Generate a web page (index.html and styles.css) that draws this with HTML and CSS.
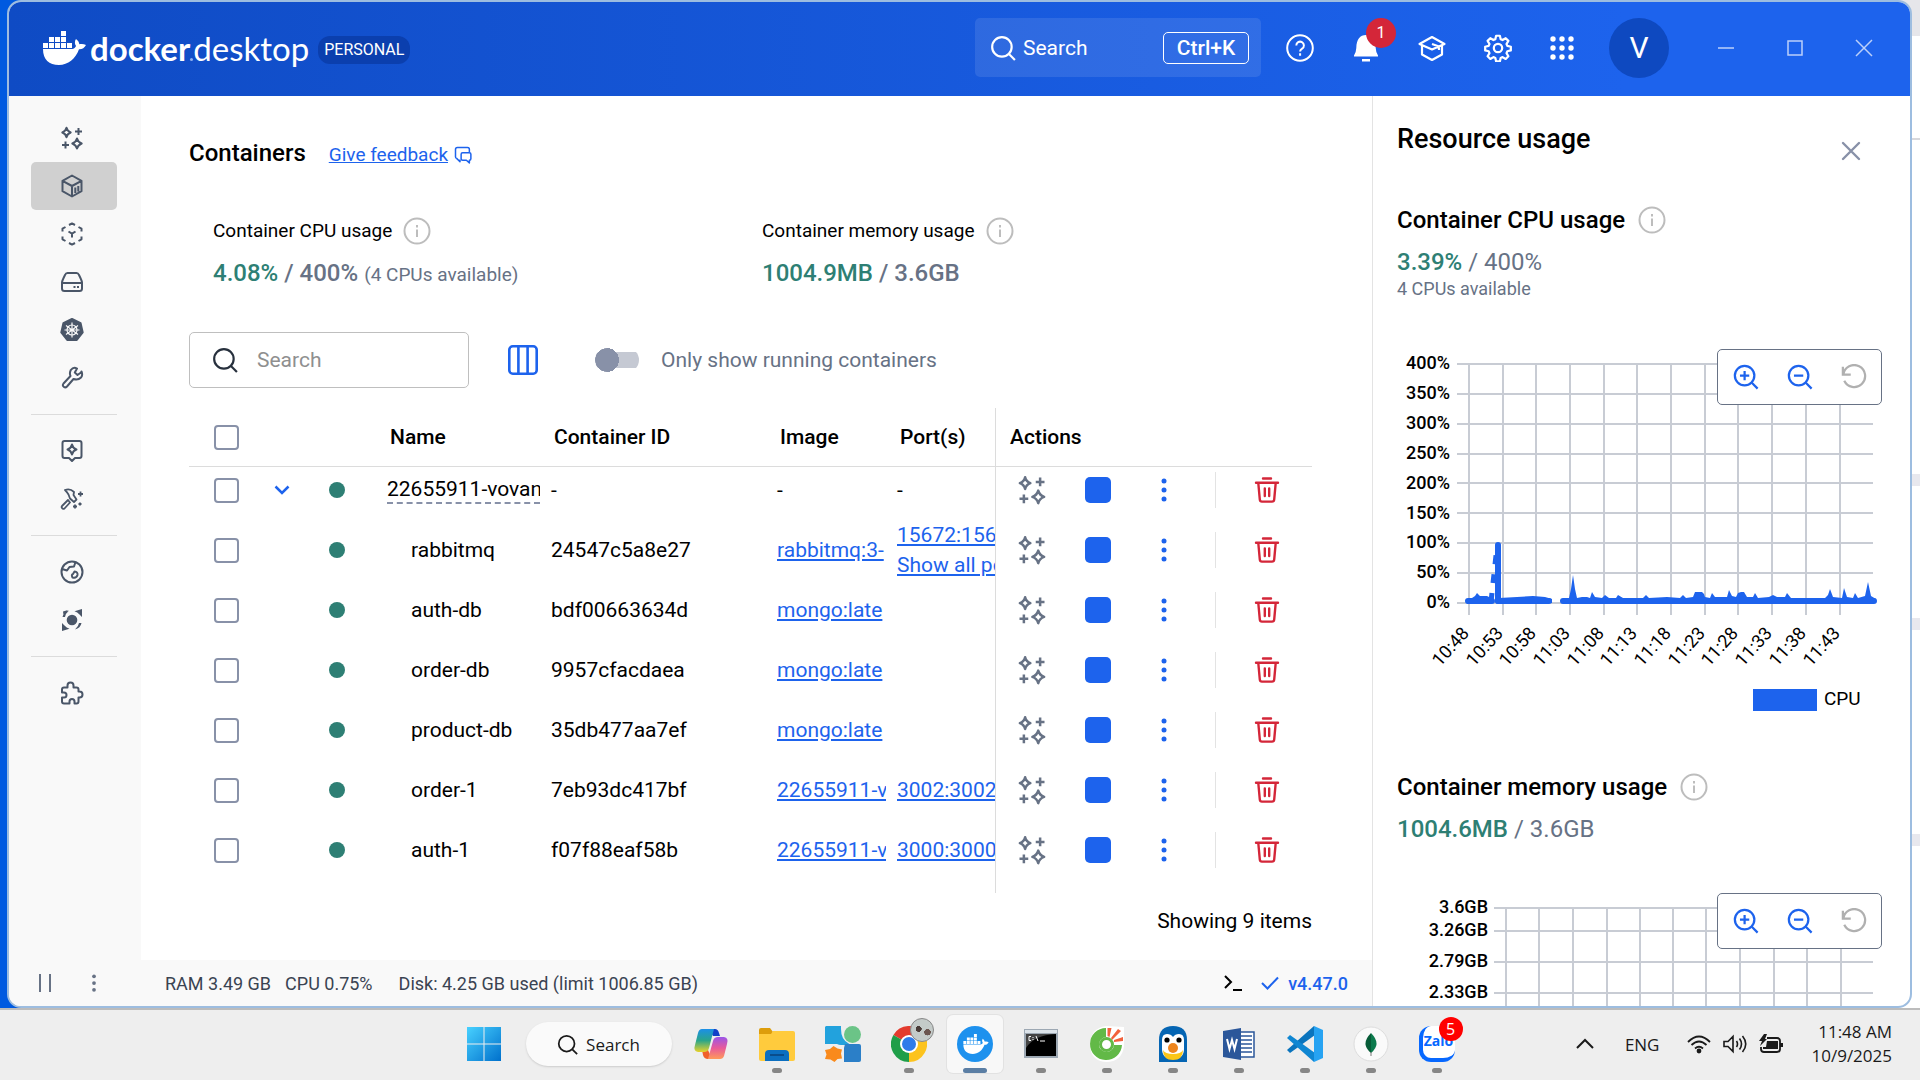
FILE: index.html
```html
<!DOCTYPE html>
<html lang="en">
<head>
<meta charset="utf-8">
<meta name="viewport" content="width=device-width, initial-scale=1">
<title>Docker Desktop</title>
<link rel="stylesheet" href="styles.css">
</head>
<body>
<svg class="sprite" aria-hidden="true">
  <symbol id="whale" viewBox="0 0 43 34"><path fill="currentColor" d="M18 0h5v5h-5zM6 6h5v5H6zM12 6h5v5h-5zM18 6h5v5h-5zM0 12h5v5H0zM6 12h5v5H6zM12 12h5v5h-5zM18 12h5v5h-5zM24 12h5v5h-5zM0 18H29C31 18 32.500 16.500 33 15C31.500 12.500 31.600 10 33 8C35 9.500 36 11 36.400 13.200C39 12.600 41 13 43 14C41.500 17 39 18.500 36 18.300C32.500 28 25 34 16 34C6 34 0 28.500 0 18Z"/></symbol>
  <symbol id="search" viewBox="0 0 24 24"><g fill="none" stroke="currentColor" stroke-width="2"><circle cx="11" cy="11" r="9"/><path d="M17.500 17.500L23 23"/></g></symbol>
  <symbol id="sparkles" viewBox="0 0 24 24"><g fill="none" stroke="currentColor" stroke-width="2" stroke-linejoin="round"><path d="M6.500 1.800Q7.300 5.200 10.700 6.500Q7.300 7.800 6.500 11.200Q5.700 7.800 2.300 6.500Q5.700 5.200 6.500 1.800ZM17 12.500Q18 16.200 21.700 17.500Q18 18.800 17 22.500Q16 18.800 12.300 17.500Q16 16.200 17 12.500Z"/><path d="M18.500 2v7M15 5.500h7M5.500 15.500v7M2 19h7"/></g></symbol>
  <symbol id="info" viewBox="0 0 28 28"><circle cx="14" cy="14" r="12.500" fill="none" stroke="currentColor" stroke-width="2"/><path stroke="currentColor" stroke-width="2" d="M14 12.500v7.500M14 8v2.400"/></symbol>
  <symbol id="chat" viewBox="0 0 24 24"><g fill="none" stroke="currentColor" stroke-width="2" stroke-linejoin="round"><path d="M8 18v3L3.500 16.500A2 2 0 0 1 2 14.500V4.500A2.500 2.500 0 0 1 4.500 2H18a2.500 2.500 0 0 1 2.500 2.500V8"/><path d="M11.500 9H20.500A2 2 0 0 1 22.500 11V17A2 2 0 0 1 20.500 19V22.500L16.500 19H11.500A2 2 0 0 1 9.500 17V11A2 2 0 0 1 11.500 9Z"/></g></symbol>
  <symbol id="dots" viewBox="0 0 24 24"><g fill="currentColor"><circle cx="12" cy="3" r="2.500"/><circle cx="12" cy="12" r="2.500"/><circle cx="12" cy="21" r="2.500"/></g></symbol>
  <symbol id="trash" viewBox="0 0 26 26"><g fill="none" stroke="currentColor" stroke-width="2.400" stroke-linecap="round" stroke-linejoin="round"><path d="M9 1.500h8M2 5.800h22M4.300 6L5.800 22.500Q6 24.600 8 24.600h10Q20 24.600 20.200 22.500L21.700 6M10.800 11.500v7.500M15.200 11.500v7.500"/></g></symbol>
  <symbol id="close" viewBox="0 0 20 20"><path stroke="currentColor" stroke-width="2.400" stroke-linecap="round" d="M2 2l16 16M18 2L2 18"/></symbol>
  <symbol id="zoomin" viewBox="0 0 28 28"><g fill="none" stroke="currentColor" stroke-width="2.400"><circle cx="12.500" cy="12.500" r="10.500"/><path d="M20 20l6.500 6.500M12.500 7.500v10M7.500 12.500h10"/></g></symbol>
  <symbol id="zoomout" viewBox="0 0 28 28"><g fill="none" stroke="currentColor" stroke-width="2.400"><circle cx="12.500" cy="12.500" r="10.500"/><path d="M20 20l6.500 6.500M7.500 12.500h10"/></g></symbol>
  <symbol id="reset" viewBox="0 0 28 28"><g fill="none" stroke="currentColor" stroke-width="2.400"><path d="M2 3v8.500h8.500M2.500 11.300A11.800 11.800 0 1 1 3.500 18"/></g></symbol>
</svg>

<div class="desktop">
  <div class="window">
    <header class="topbar">
      <div class="brand">
        <svg class="brand-mark"><use href="#whale"/></svg>
        <span class="brand-name"><b>docker</b><span class="brand-dot"></span>desktop</span>
        <span class="plan">PERSONAL</span>
      </div>
      <button class="top-search" type="button">
        <svg class="i26"><use href="#search"/></svg><span>Search</span><kbd>Ctrl+K</kbd>
      </button>
      <nav class="top-actions" aria-label="Application">
        <button type="button" aria-label="Help"><svg class="i28" viewBox="0 0 28 28" fill="none" stroke="currentColor" stroke-width="2"><circle cx="14" cy="14" r="12.800"/><path d="M10.300 11.500a3.800 3.800 0 1 1 5.800 3.200C14.600 15.600 14.100 16.300 14.100 17.400M14.100 19.300v2.400"/></svg></button>
        <button type="button" aria-label="Notifications"><svg class="i28" viewBox="0 0 28 28" fill="currentColor"><path d="M2 21.500Q4 19 4.300 14C4.600 5 8 1 14 1S23.400 5 23.700 14Q24 19 26 21.500V22.500H2ZM10 25h8v2.500h-8z"/></svg><span class="count">1</span></button>
        <button type="button" aria-label="Learning center"><svg class="i28" viewBox="0 0 28 28" fill="none" stroke="currentColor" stroke-width="2.200" stroke-linejoin="round"><path d="M14 3L26.500 10L14 15.500L1.500 10ZM4 11.500V20.500L14 26L24 20.500V16M14 10L21 12.500V16M24 11v6"/></svg></button>
        <button type="button" aria-label="Settings"><svg class="i28" viewBox="0 0 24 24" fill="none" stroke="currentColor" stroke-width="1.900" stroke-linejoin="round"><circle cx="12" cy="12" r="3.600"/><path d="M10.400 1.500h3.200l.7 3 1.600.7 2.700-1.600 2.300 2.300-1.600 2.700.7 1.600 3 .7v3.200l-3 .7-.7 1.600 1.600 2.700-2.300 2.300-2.700-1.600-1.600.7-.7 3h-3.200l-.7-3-1.600-.7-2.700 1.600-2.300-2.300 1.600-2.700-.7-1.600-3-.7v-3.200l3-.7.7-1.600-1.600-2.700 2.300-2.300 2.700 1.600 1.600-.7z"/></svg></button>
        <button type="button" aria-label="Extensions"><svg class="i28" viewBox="0 0 28 28" fill="currentColor"><circle cx="5" cy="5" r="2.700"/><circle cx="14" cy="5" r="2.700"/><circle cx="23" cy="5" r="2.700"/><circle cx="5" cy="14" r="2.700"/><circle cx="14" cy="14" r="2.700"/><circle cx="23" cy="14" r="2.700"/><circle cx="5" cy="23" r="2.700"/><circle cx="14" cy="23" r="2.700"/><circle cx="23" cy="23" r="2.700"/></svg></button>
      </nav>
      <button class="avatar" type="button">V</button>
      <div class="win-controls">
        <button type="button" aria-label="Minimize"><svg class="i18" viewBox="0 0 18 18"><path stroke="currentColor" stroke-width="1.500" d="M1 9h16"/></svg></button>
        <button type="button" aria-label="Maximize"><svg class="i18" viewBox="0 0 18 18"><path fill="none" stroke="currentColor" stroke-width="1.500" d="M2 2h14v14H2z"/></svg></button>
        <button type="button" aria-label="Close"><svg class="i18" viewBox="0 0 18 18"><path stroke="currentColor" stroke-width="1.500" d="M1 1l16 16M17 1L1 17"/></svg></button>
      </div>
    </header>

    <div class="workspace">
      <nav class="sidebar" aria-label="Main">
        <a href="#ai" aria-label="Ask Gordon"><svg><use href="#sparkles"/></svg></a>
        <a href="#containers" aria-label="Containers" class="active"><svg viewBox="0 0 24 24"><path d="M12 1.500L21.500 6.800V17.200L12 22.500L2.500 17.200V6.800ZM2.500 6.800L12 12L21.500 6.800M12 12V22.500M15.300 13.500v5.500M18.300 12v5.500"/></svg></a>
        <a href="#images" aria-label="Images"><svg viewBox="0 0 24 24"><path d="M9 3L12 1.400L15 3M18.500 5L21.500 6.700V9.500M21.500 14.500V17.300L18.500 19M15 21L12 22.600L9 21M5.500 19L2.500 17.300V14.500M2.500 9.500V6.700L5.500 5M8.500 9.500L12 11.700L15.500 9.500M12 11.700V15.500"/></svg></a>
        <a href="#volumes" aria-label="Volumes"><svg viewBox="0 0 24 24"><path d="M2 12.500Q2 11 5 5Q5.800 3 7.500 3H16.500Q18.200 3 19 5Q22 11 22 12.500V18.500Q22 21 19.500 21H4.500Q2 21 2 18.500ZM2 13H22M13.500 17h2M17 17h2"/></svg></a>
        <a href="#kubernetes" aria-label="Kubernetes"><svg viewBox="0 0 24 24"><path fill="currentColor" d="M12 1L20.600 5.200L22.700 14.500L16.800 22H7.200L1.300 14.500L3.400 5.200Z"/><g stroke="#f9f9f9" stroke-width="1.200"><circle cx="12" cy="12" r="5"/><path d="M12 4.500v15M6 7.500L18 16.500M18 7.500L6 16.500M4.500 12h15"/></g></svg></a>
        <a href="#builds" aria-label="Builds"><svg viewBox="0 0 24 24"><path d="M20 7.500L16.500 10L13.800 7.500L16 3.500Q12.500 1.500 9.800 5Q8.200 8 9.500 11L2.500 18.500Q1 20.500 3 22Q4.500 23 6 21.500L12.500 14Q17 15.500 20 12.500Q22 10.200 20.500 6.500Z" transform="translate(1 -1)"/></svg></a>
        <hr>
        <a href="#models" aria-label="Models"><svg viewBox="0 0 24 24"><path d="M4.500 2H19.500Q21.500 2 21.500 4V17Q21.500 19 19.500 19H15L12 22L9 19H4.500Q2.500 19 2.500 17V4Q2.500 2 4.500 2ZM12 5.500Q13 9.500 16.500 10.500Q13 11.500 12 15.500Q11 11.500 7.500 10.500Q11 9.500 12 5.500Z"/></svg></a>
        <a href="#mcp" aria-label="MCP toolkit"><svg viewBox="0 0 24 24"><path d="M5 3Q10 1 14 5L13.500 8L16.500 12.500L14 15L10 11.500L8.500 7.500Q7 5 5 3ZM8 13L10 15.500L4.500 21.500Q3 22.500 2 21Q1.200 20 2 19ZM20.500 4.500v5M18 7h5M15 17.500v4M13 19.500h4M20 15.500v3M18.500 17h3" stroke-width="1.800"/></svg></a>
        <hr>
        <a href="#hub" aria-label="Docker Hub"><svg viewBox="0 0 24 24"><circle cx="12" cy="12" r="10.500"/><path d="M2 9L7 10.500L9.500 7L14 6.500L15.500 2M14.500 11.500Q18 12 17.500 15Q16.500 18.500 12.500 17.500Q11 14.500 13 14Z"/></svg></a>
        <a href="#scout" aria-label="Docker Scout"><svg viewBox="0 0 24 24"><g fill="currentColor" stroke="none"><circle cx="12" cy="12" r="5.300"/><path d="M22 1V9L19.500 6.500Q17.500 4.200 14.500 3.200ZM2 23V15L4.500 17.500Q6.500 19.800 9.500 20.800ZM2.500 9Q3.500 4 9 2.500Q5.500 5.500 5 9ZM21.500 15Q20.500 20 15 21.500Q18.500 18.500 19 15ZM3 3.500L8 2L3.500 7Z"/></g></svg></a>
        <hr>
        <a href="#extensions" aria-label="Extensions"><svg viewBox="0 0 24 24"><path d="M7.500 6.500V4.500A3 3 0 0 1 13.500 4.500V6.500H16.500Q18.500 6.500 18.500 8.500V10.500H19.500A3 3 0 0 1 19.500 16.500H18.500V20.500Q18.500 22.500 16.500 22.500H14.500V20.500A2.500 2.500 0 0 0 9.500 20.500V22.500H4Q2 22.500 2 20.500V16.500H4A2.500 2.500 0 0 0 4 11.500H2V8.500Q2 6.500 4 6.500Z"/></svg></a>
      </nav>

      <main class="main">
        <div class="title-row">
          <h1>Containers</h1>
          <a class="feedback" href="#feedback"><span>Give feedback</span><svg><use href="#chat"/></svg></a>
        </div>
        <div class="stats">
          <section>
            <div class="stat-label">Container CPU usage <svg class="info"><use href="#info"/></svg></div>
            <div class="stat-value"><b>4.08%</b> / 400% <small>(4 CPUs available)</small></div>
          </section>
          <section>
            <div class="stat-label">Container memory usage <svg class="info"><use href="#info"/></svg></div>
            <div class="stat-value"><b>1004.9MB</b> / 3.6GB</div>
          </section>
        </div>
        <div class="toolbar">
          <label class="filter"><svg class="i26"><use href="#search"/></svg><input type="text" placeholder="Search" aria-label="Search containers"></label>
          <button class="columns" type="button" aria-label="Choose columns"><svg viewBox="0 0 30 30" fill="none" stroke="currentColor" stroke-width="2.600"><rect x="1.300" y="1.300" width="27.400" height="27.400" rx="3.500"/><path d="M10.400 1v28M19.600 1v28"/></svg></button>
          <label class="switch"><input type="checkbox" role="switch"><span>Only show running containers</span></label>
        </div>

        <table class="grid">
          <colgroup><col class="c-check"><col class="c-open"><col class="c-state"><col class="c-name"><col class="c-id"><col class="c-image"><col class="c-port"><col></colgroup>
          <thead>
            <tr><th><input type="checkbox" class="tick" aria-label="Select all"></th><th></th><th></th><th class="h">Name</th><th class="h">Container ID</th><th class="h">Image</th><th class="h">Port(s)</th><th class="act h">Actions</th></tr>
          </thead>
          <tbody>
            <tr class="group"><td><input type="checkbox" class="tick" aria-label="Select group"></td><td><button type="button" class="chev" aria-label="Collapse"><svg viewBox="0 0 16 16" fill="none" stroke="currentColor" stroke-width="2.500"><path d="M1.500 4.500L8 11L14.500 4.500"/></svg></button></td><td><i class="dot"></i></td><td><div class="clip stack">22655911-vovan</div></td><td>-</td><td>-</td><td>-</td>
              <td class="act"><div class="acts"><button type="button" aria-label="Ask Gordon"><svg><use href="#sparkles"/></svg></button><button type="button" aria-label="Stop"><i class="stop"></i></button><button type="button" aria-label="More"><svg class="more"><use href="#dots"/></svg></button><i class="rule"></i><button type="button" aria-label="Delete" class="del"><svg><use href="#trash"/></svg></button></div></td></tr>
            <tr><td><input type="checkbox" class="tick" aria-label="Select rabbitmq"></td><td></td><td><i class="dot"></i></td><td class="child">rabbitmq</td><td>24547c5a8e27</td><td><div class="clip"><a href="#i">rabbitmq:3-</a></div></td><td><div class="clip"><a href="#p">15672:15672</a><br><a href="#p">Show all ports</a></div></td>
              <td class="act"><div class="acts"><button type="button" aria-label="Ask Gordon"><svg><use href="#sparkles"/></svg></button><button type="button" aria-label="Stop"><i class="stop"></i></button><button type="button" aria-label="More"><svg class="more"><use href="#dots"/></svg></button><i class="rule"></i><button type="button" aria-label="Delete" class="del"><svg><use href="#trash"/></svg></button></div></td></tr>
            <tr><td><input type="checkbox" class="tick" aria-label="Select auth-db"></td><td></td><td><i class="dot"></i></td><td class="child">auth-db</td><td>bdf00663634d</td><td><div class="clip"><a href="#i">mongo:late</a></div></td><td></td>
              <td class="act"><div class="acts"><button type="button" aria-label="Ask Gordon"><svg><use href="#sparkles"/></svg></button><button type="button" aria-label="Stop"><i class="stop"></i></button><button type="button" aria-label="More"><svg class="more"><use href="#dots"/></svg></button><i class="rule"></i><button type="button" aria-label="Delete" class="del"><svg><use href="#trash"/></svg></button></div></td></tr>
            <tr><td><input type="checkbox" class="tick" aria-label="Select order-db"></td><td></td><td><i class="dot"></i></td><td class="child">order-db</td><td>9957cfacdaea</td><td><div class="clip"><a href="#i">mongo:late</a></div></td><td></td>
              <td class="act"><div class="acts"><button type="button" aria-label="Ask Gordon"><svg><use href="#sparkles"/></svg></button><button type="button" aria-label="Stop"><i class="stop"></i></button><button type="button" aria-label="More"><svg class="more"><use href="#dots"/></svg></button><i class="rule"></i><button type="button" aria-label="Delete" class="del"><svg><use href="#trash"/></svg></button></div></td></tr>
            <tr><td><input type="checkbox" class="tick" aria-label="Select product-db"></td><td></td><td><i class="dot"></i></td><td class="child">product-db</td><td>35db477aa7ef</td><td><div class="clip"><a href="#i">mongo:late</a></div></td><td></td>
              <td class="act"><div class="acts"><button type="button" aria-label="Ask Gordon"><svg><use href="#sparkles"/></svg></button><button type="button" aria-label="Stop"><i class="stop"></i></button><button type="button" aria-label="More"><svg class="more"><use href="#dots"/></svg></button><i class="rule"></i><button type="button" aria-label="Delete" class="del"><svg><use href="#trash"/></svg></button></div></td></tr>
            <tr><td><input type="checkbox" class="tick" aria-label="Select order-1"></td><td></td><td><i class="dot"></i></td><td class="child">order-1</td><td>7eb93dc417bf</td><td><div class="clip"><a href="#i">22655911-v</a></div></td><td><div class="clip"><a href="#p">3002:3002</a></div></td>
              <td class="act"><div class="acts"><button type="button" aria-label="Ask Gordon"><svg><use href="#sparkles"/></svg></button><button type="button" aria-label="Stop"><i class="stop"></i></button><button type="button" aria-label="More"><svg class="more"><use href="#dots"/></svg></button><i class="rule"></i><button type="button" aria-label="Delete" class="del"><svg><use href="#trash"/></svg></button></div></td></tr>
            <tr><td><input type="checkbox" class="tick" aria-label="Select auth-1"></td><td></td><td><i class="dot"></i></td><td class="child">auth-1</td><td>f07f88eaf58b</td><td><div class="clip"><a href="#i">22655911-v</a></div></td><td><div class="clip"><a href="#p">3000:3000</a></div></td>
              <td class="act"><div class="acts"><button type="button" aria-label="Ask Gordon"><svg><use href="#sparkles"/></svg></button><button type="button" aria-label="Stop"><i class="stop"></i></button><button type="button" aria-label="More"><svg class="more"><use href="#dots"/></svg></button><i class="rule"></i><button type="button" aria-label="Delete" class="del"><svg><use href="#trash"/></svg></button></div></td></tr>
            <tr class="tail"><td colspan="7"></td><td class="act"></td></tr>
          </tbody>
        </table>
        <p class="total">Showing 9 items</p>
      </main>

      <aside class="panel">
        <div class="panel-head"><h2>Resource usage</h2><button type="button" aria-label="Close panel"><svg><use href="#close"/></svg></button></div>
        <section class="metric">
          <h3>Container CPU usage <svg class="info"><use href="#info"/></svg></h3>
          <div class="metric-value"><b>3.39%</b> / 400%</div>
          <div class="metric-note">4 CPUs available</div>
          <div class="chart cpu">
            <svg class="plot" viewBox="0 0 488 371" preserveAspectRatio="xMinYMin meet">
              <path class="lines" d="M60 15H476M60 45H476M60 75H476M60 105H476M60 134H476M60 164H476M60 194H476M60 224H476M60 254H476M72 15V266M106 15V266M139 15V266M173 15V266M207 15V266M240 15V266M274 15V266M308 15V266M341 15V266M375 15V266M409 15V266M443 15V266"/>
              <g class="ylab"><text x="53" y="20">400%</text><text x="53" y="50">350%</text><text x="53" y="80">300%</text><text x="53" y="110">250%</text><text x="53" y="140">200%</text><text x="53" y="170">150%</text><text x="53" y="199">100%</text><text x="53" y="229">50%</text><text x="53" y="259">0%</text></g>
              <g class="xlab"><text transform="translate(73 285) rotate(-48)">10:48</text><text transform="translate(107 285) rotate(-48)">10:53</text><text transform="translate(140 285) rotate(-48)">10:58</text><text transform="translate(174 285) rotate(-48)">11:03</text><text transform="translate(208 285) rotate(-48)">11:08</text><text transform="translate(241 285) rotate(-48)">11:13</text><text transform="translate(275 285) rotate(-48)">11:18</text><text transform="translate(309 285) rotate(-48)">11:23</text><text transform="translate(342 285) rotate(-48)">11:28</text><text transform="translate(376 285) rotate(-48)">11:33</text><text transform="translate(410 285) rotate(-48)">11:38</text><text transform="translate(444 285) rotate(-48)">11:43</text></g>
              <g class="series"><path d="M71 252H95M101 252H152M166 252H477"/><path class="dash" d="M94 253Q97 225 100 197"/><path d="M101 196V252"/><path class="area" d="M70 250L75 249L78 247L80 244L83 247L90 247L94 249V255H70ZM102 249L120 248L136 247L148 248L155 250V254H102ZM165 250L172 249L174 240L176 226L178 240L180 249L185 248L190 248L193 249L195 243L198 248L205 249L208 246L212 249L219 249L221 246L226 249L246 249L249 246L252 249L270 248L283 249L286 246L289 249L296 248L298 243L302 243L305 243L307 245L308 248L313 249L315 244L318 248L330 248L332 241L335 247L339 248L341 244L344 243L347 243L350 248L356 248L358 244L361 249L372 248L376 246L380 248L388 248L390 244L394 249L428 249L431 246L433 240L436 248L445 249L447 239L450 248L456 249L458 244L461 249L468 247L471 233L474 247L479 250V254H165Z"/></g>
              <path fill="#1d63ed" d="M356 340h64v22h-64z"/><text class="leg" x="427" y="356">CPU</text>
            </svg>
            <div class="zoom"><button type="button" aria-label="Zoom in"><svg><use href="#zoomin"/></svg></button><button type="button" aria-label="Zoom out"><svg><use href="#zoomout"/></svg></button><button type="button" aria-label="Reset zoom" disabled><svg><use href="#reset"/></svg></button></div>
          </div>
        </section>
        <section class="metric mem">
          <h3>Container memory usage <svg class="info"><use href="#info"/></svg></h3>
          <div class="metric-value"><b>1004.6MB</b> / 3.6GB</div>
          <div class="chart">
            <svg class="plot" viewBox="0 0 488 371" preserveAspectRatio="xMinYMin meet">
              <path class="lines" d="M97 15H476M97 38H476M97 69H476M97 100H476M97 131H476M109 15V266M142 15V266M176 15V266M210 15V266M243 15V266M276 15V266M309 15V266M343 15V266M377 15V266M410 15V266M444 15V266"/>
              <g class="ylab"><text x="91" y="20">3.6GB</text><text x="91" y="43">3.26GB</text><text x="91" y="74">2.79GB</text><text x="91" y="105">2.33GB</text></g>
            </svg>
            <div class="zoom"><button type="button" aria-label="Zoom in"><svg><use href="#zoomin"/></svg></button><button type="button" aria-label="Zoom out"><svg><use href="#zoomout"/></svg></button><button type="button" aria-label="Reset zoom" disabled><svg><use href="#reset"/></svg></button></div>
          </div>
        </section>
      </aside>

      <footer class="status">
        <div class="engine"><button type="button" aria-label="Pause"><svg class="i18" viewBox="0 0 18 18"><path stroke="currentColor" stroke-width="2" d="M4 0v18M14 0v18"/></svg></button><button type="button" aria-label="Engine menu"><svg class="i18"><use href="#dots"/></svg></button></div>
        <span class="ram">RAM 3.49 GB</span><span class="cpu-use">CPU 0.75%</span><span>Disk: 4.25 GB used (limit 1006.85 GB)</span>
        <button class="term" type="button" aria-label="Terminal"><svg viewBox="0 0 20 18" fill="none" stroke="currentColor" stroke-width="2"><path d="M2 2l6 6-6 6M10 16h9"/></svg></button>
        <a class="version" href="#version"><svg viewBox="0 0 18 14" fill="none" stroke="currentColor" stroke-width="2"><path d="M1 7l5.500 5.500L17 1.500"/></svg>v4.47.0</a>
      </footer>
    </div>
  </div>
</div>

<div class="taskbar">
  <div class="apps">
    <button type="button" aria-label="Start"><svg viewBox="0 0 36 36"><defs><linearGradient id="gw" x2="1" y2="1"><stop stop-color="#48d1ff"/><stop offset="1" stop-color="#0070cc"/></linearGradient></defs><path fill="url(#gw)" d="M1 1h16.500v16.500H1zM18.500 1H35v16.500H18.500zM1 18.500h16.500V35H1zM18.500 18.500H35V35H18.500z"/></svg></button>
    <button type="button" class="task-search"><svg viewBox="0 0 24 24"><use href="#search"/></svg>Search</button>
    <button type="button" aria-label="Copilot"><svg viewBox="0 0 36 36"><defs><linearGradient id="gc" x2="0" y2="1"><stop stop-color="#1b8fe8"/><stop offset=".5" stop-color="#2aa58a"/><stop offset="1" stop-color="#e8d22a"/></linearGradient><linearGradient id="gd" x2="0" y2="1"><stop stop-color="#9a55e8"/><stop offset=".5" stop-color="#e85a9a"/><stop offset="1" stop-color="#ff9a5a"/></linearGradient></defs><path fill="#1240c8" d="M16 3h6q3 0 4 4l1 3h-7z"/><path fill="#f0602a" d="M9 24l6 0 4 9h-4q-4 0-5-4z"/><path fill="url(#gc)" d="M9 3h12l-5 19q-1 4-5 4H5q-5-1-3-7L5 7q1-4 4-4z"/><path fill="url(#gd)" d="M25 11h6q5 1 3 7l-3 12q-1 3-4 3H15l5-18q1-4 5-4z"/></svg></button>
    <button type="button" class="open" aria-label="File Explorer"><svg viewBox="0 0 36 36"><path fill="#dd9d0b" d="M0 4q0-2 2-2h9l3 4-2 4H0z"/><path fill="#ffcb3d" d="M0 8h12l2-3h20q2 0 2 2v26q0 2-2 2H2q-2 0-2-2z"/><path fill="#0c6fc0" d="M6 35V28q0-4 4-4h16q4 0 4 4v7z"/><path fill="#0a4d8c" d="M11 28h14v2H11z"/></svg></button>
    <button type="button" aria-label="Widgets"><svg viewBox="0 0 36 36"><path fill="#22a2dd" d="M1 0h15v3q0 10 7 14 3 2 3 2H16q-2 0-4-1H0V1z"/><path fill="#2b7fc8" d="M20 18h14q2 0 2 2v14q0 2-2 2H19V22z"/><circle cx="27.500" cy="8.500" r="8.500" fill="#6bc487"/><path fill="#f98a1c" d="M8.500 20l4 2.500 4.500 1-1 4 1 5-4.500.5-3 3-4-2.500-5.500-.5 1.500-4.500L0 24l5-1z"/></svg></button>
    <button type="button" class="open" aria-label="Chrome"><svg viewBox="0 0 36 36"><path fill="#e33b2e" d="M18 18L2.400 9A18 18 0 0 1 33.600 9Z"/><path fill="#fcc31e" d="M18 18L33.600 9A18 18 0 0 1 18 36Z"/><path fill="#1f9e49" d="M18 18V36A18 18 0 0 1 2.400 9Z"/><circle cx="18" cy="18" r="9" fill="#fff"/><circle cx="18" cy="18" r="7" fill="#2f7bea"/></svg><span class="profile"></span></button>
    <button type="button" class="open current" aria-label="Docker Desktop"><svg viewBox="0 0 36 36"><circle cx="18" cy="18" r="18" fill="#1d91ee"/><svg x="6" y="8" width="26" height="20" color="#fff"><use href="#whale"/></svg></svg></button>
    <button type="button" class="open" aria-label="Command Prompt"><svg viewBox="0 0 36 36"><path fill="#9da8b3" d="M1 3h34v29H1z"/><path fill="#dde4ea" d="M2 4h32v3H2z"/><path fill="#000" d="M3 8h30v22H3z"/><path fill="#444" d="M3 8h30q-22 1-30 14z"/><path stroke="#fff" fill="none" d="M8 10.500H6v4h2M10 11v1M10 13v1M13 10l2 5M17 15h5"/></svg></button>
    <button type="button" class="open" aria-label="Coc Coc"><svg viewBox="0 0 36 36"><path fill="#fff" d="M17 0L35 1 35 20Q33 36 17 36Q1 35 1 18Q2 2 17 0Z"/><path fill="#62b947" d="M17 2V11A7.500 7.500 0 1 0 25 19H33A16 16 0 1 1 17 2Z"/><circle cx="17.500" cy="18.500" r="6" fill="none" stroke="#62b947" stroke-width="3"/><path fill="#f2613c" d="M18.500 2h4l-2 9-2-1zM29 3l3 2-9 9-1-2zM34 11v4l-9 1v-2z"/></svg></button>
    <button type="button" class="open" aria-label="Penguin"><svg viewBox="0 0 36 36"><path fill="#0565b3" d="M4 36V14Q4 0 18 0T32 14V36Z"/><path fill="#fff" d="M7 14q0-6 5-6 4 0 6 3 2-3 6-3 5 0 5 6v9q0 10-11 10T7 23z"/><path fill="#fbc617" d="M8 24q2 4 10 4t10-4q0 10-10 10T8 24z"/><circle cx="12" cy="14" r="2.600"/><circle cx="24" cy="14" r="2.600"/><circle cx="18" cy="22" r="5" fill="#ee861e"/></svg></button>
    <button type="button" class="open" aria-label="Word"><svg viewBox="0 0 36 36"><path fill="#fff" stroke="#2b579a" stroke-width="1.500" d="M18 6h15v25H18z"/><path stroke="#2b579a" stroke-width="1.700" d="M20 10h11M20 14h11M20 18h11M20 22h11M20 26h11"/><path fill="#2b579a" d="M2 5L20 2V34L2 31z"/><path fill="none" stroke="#fff" stroke-width="2" d="M6 13l2.500 10L11 14l2.500 9L16 13"/></svg></button>
    <button type="button" class="open" aria-label="Visual Studio Code"><svg viewBox="0 0 36 36"><path fill="#0a74bd" d="M27 0L0 24L3 27L28 9z"/><path fill="#0f86d2" d="M3 9L0 12L27 36L28 27z"/><path fill="#27a3f2" d="M27 0L36 4V32L27 36Z"/></svg></button>
    <button type="button" class="open" aria-label="MongoDB Compass"><svg viewBox="0 0 36 36"><circle cx="18" cy="18" r="17" fill="#fafafa" stroke="#ddd"/><path fill="#0c7a4d" d="M18 7Q29 18 18 27z"/><path fill="#075c38" d="M18 7Q7 18 18 27z"/><path stroke="#777" d="M18 26v4"/></svg></button>
    <button type="button" class="open" aria-label="Zalo"><span class="zalo">Zalo</span><span class="badge">5</span></button>
  </div>
  <div class="tray">
    <button type="button" aria-label="Hidden icons"><svg class="i18" viewBox="0 0 18 18" fill="none" stroke="currentColor" stroke-width="2"><path d="M1 13l8-8 8 8"/></svg></button>
    <span class="lang">ENG</span>
    <span class="sys">
      <svg viewBox="0 0 24 20" fill="none" stroke="currentColor" stroke-width="1.800"><path d="M1 8Q12-3 23 8M4.500 11Q12 4 19.500 11M8 14.500Q12 11 16 14.500"/><circle cx="12" cy="17" r="1.500" fill="currentColor"/></svg>
      <svg viewBox="0 0 24 20" fill="none" stroke="currentColor" stroke-width="1.600"><path d="M1 7.500h4l5-5v15l-5-5H1zM13.500 7q2 3 0 6M16.500 4.500q4 5.500 0 11M19.500 2q6.500 8 0 16"/></svg>
      <svg viewBox="0 0 24 20"><path fill="none" stroke="currentColor" stroke-width="1.800" d="M8 4h10q3 0 3 3v8q0 3-3 3H5q-3 0-3-3v-2"/><path fill="currentColor" d="M8 7h11v8H4v-2h3zM21 9h3v4h-3zM5 0L0 7h3L1 12l7-7H6l2-5z"/></svg>
    </span>
    <time class="clock">11:48 AM<br>10/9/2025</time>
  </div>
</div>
</body>
</html>
```
FILE: styles.css
```css
* { box-sizing: border-box; }
body { margin: 0; height: 100vh; display: flex; flex-direction: column; overflow: hidden; font-family: Roboto, "Liberation Sans", sans-serif; font-size: 18px; color: #000; background: #fff; }
button { border: 0; padding: 0; background: none; color: inherit; font: inherit; display: inline-flex; align-items: center; justify-content: center; flex: none; }
svg { display: block; flex: none; }
a { color: #1d63ed; }
b { font-weight: 500; }
h1, h2, h3, p { margin: 0; font-weight: 500; }
.sprite { position: absolute; width: 0; height: 0; }
.i18 { width: 18px; height: 18px; }
.i26 { width: 26px; height: 26px; }
.i28 { width: 28px; height: 28px; }

.desktop { flex: 1; min-height: 0; display: flex; padding: 0 8px 0 7px;
  background:
    linear-gradient(#e6e6ea 0 36px, #fff 36px 138px, #d8d8dc 138px 140px, #fff 140px 474px, #e8e8ee 474px 486px, #fff 486px 618px, #e8e8ee 618px 630px, #fff 630px 834px, #e8e8ee 834px 846px, #fff 846px) right / 30px 100% no-repeat,
    #005ae0; }
.window { flex: 1; min-width: 0; display: flex; flex-direction: column; border: 2px solid #9dbde0; border-radius: 14px; overflow: hidden; background: #fff; }

.topbar { height: 94px; flex: none; display: flex; align-items: center; color: #fff; background: linear-gradient(90deg, #0f4bc4, #1d63ed 85%); padding: 0 12px 3px 34px; }
.brand { display: flex; align-items: center; margin-right: auto; }
.brand-mark { width: 43px; height: 34px; }
.brand-name { font-family: Lato, sans-serif; font-size: 33px; line-height: 40px; margin-left: 4px; display: flex; align-items: baseline; }
.brand-name b { font-weight: 700; }
.brand-dot { width: 3px; height: 3px; border-radius: 50%; background: #8fb0ee; }
.plan { margin-left: 9px; padding: 0 6px; height: 28px; line-height: 28px; border-radius: 12px; background: #0b3fae; font-size: 16px; font-weight: 400; margin-top: 4px; }
.top-search { width: 286px; height: 59px; border-radius: 5px; background: rgba(255,255,255,.1); padding: 0 12px 0 15px; font-size: 21px; gap: 7px; }
.top-search kbd { margin-left: auto; font: 500 21px Roboto, sans-serif; border: 1px solid #fff; border-radius: 5px; width: 86px; height: 32px; line-height: 30px; text-align: center; }
.top-actions { display: flex; margin-left: 6px; }
.top-actions button { width: 66px; height: 60px; position: relative; }
.top-actions button:last-child { width: 62px; }
.count { position: absolute; top: 0; right: 3px; width: 30px; height: 30px; border-radius: 50%; background: #d42639; font-size: 16px; line-height: 30px; }
.avatar { width: 60px; height: 60px; border-radius: 50%; background: #0e49c0; font-size: 30px; margin-left: 16px; }
.win-controls { display: flex; margin-left: 22px; color: #bcd0fa; }
.win-controls button { width: 69px; height: 60px; }

.workspace { flex: 1; min-height: 0; display: grid; grid-template: minmax(0, 1fr) 46px / 132px minmax(0, 1fr) 538px; }
.sidebar { background: #f9f9f9; padding: 18px 24px 0 22px; display: flex; flex-direction: column; color: #4a5668; }
.sidebar a { height: 48px; flex: none; border-radius: 5px; display: flex; align-items: center; padding-left: 29px; color: inherit; }
.sidebar a.active { background: #d0d0d0; }
.sidebar svg { width: 24px; height: 24px; fill: none; stroke: currentColor; stroke-width: 2; stroke-linejoin: round; }
.sidebar hr { width: 100%; height: 1px; border: 0; background: #dcdcdc; margin: 12px 0; flex: none; }

.main { padding: 37px 60px 0 48px; min-width: 0; overflow: hidden; }
.title-row { display: flex; align-items: center; height: 40px; gap: 23px; }
h1 { font-size: 24px; line-height: 32px; }
.feedback { display: flex; align-items: center; gap: 6px; font-size: 19px; line-height: 24px; margin-top: 4px; }
.feedback svg { width: 18px; height: 18px; }
.stats { display: grid; grid-template-columns: 549px 1fr; padding-left: 24px; margin-top: 42px; }
.stat-label, h3 { display: flex; align-items: center; gap: 13px; line-height: 32px; }
.stat-label { font-size: 19px; gap: 11px; }
.info { width: 28px; height: 28px; color: #bdbdbd; }
.stat-value { margin-top: 10px; font-size: 24px; line-height: 32px; color: #677285; font-weight: 500; }
.stat-value b, .metric-value b { color: #2e7f74; font-weight: 500; }
.stat-value small { font-size: 19px; font-weight: 400; }
.toolbar { display: flex; align-items: center; margin-top: 41px; height: 56px; }
.filter { width: 280px; height: 56px; border: 1px solid #bfbfbf; border-radius: 5px; display: flex; align-items: center; gap: 19px; padding: 0 22px; color: #27303d; }
.filter input { border: 0; outline: 0; background: none; font: 21px Roboto, sans-serif; width: 180px; padding: 0; }
.filter input::placeholder { color: #8f8f8f; opacity: 1; }
.columns { margin-left: 39px; color: #1d63ed; }
.columns svg { width: 30px; height: 30px; }
.switch { display: flex; align-items: center; margin-left: 57px; gap: 22px; font-size: 21px; color: #677285; }
.switch input { appearance: none; margin: 0; width: 44px; height: 24px; background: radial-gradient(circle at 12px 12px, #8891a8 0 12px, transparent 12px), linear-gradient(#c5c9d3, #c5c9d3) 0 4px / 44px 16px no-repeat; border-radius: 12px; }

.grid { width: 100%; table-layout: fixed; border-collapse: separate; border-spacing: 0; margin-top: 20px; font-size: 21px; line-height: 30px; text-align: left; }
.c-check { width: 74px; }
.c-open { width: 38px; }
.c-state { width: 72px; }
.c-name { width: 167px; }
.c-id { width: 226px; }
.c-image { width: 120px; }
.c-port { width: 109px; }
.grid th { height: 59px; padding: 0; border-bottom: 1px solid #dcdcdc; font-weight: 500; }
.grid td { height: 60px; padding: 0; white-space: nowrap; }
.grid td:nth-child(n+4) { padding-left: 11px; }
.grid .h { padding-left: 14px; }
.grid th:nth-child(4) { padding-left: 17px; }
.grid td:nth-child(4) { padding-left: 14px; }
.grid td.child { padding-left: 38px; }
.grid .act { border-left: 1px solid #dcdcdc; }
.grid td.act { padding-left: 3px; }
.grid .group td { height: 53px; padding-bottom: 7px; }
.grid .tail td { height: 13px; }
.grid td:nth-child(-n+3), .grid th:nth-child(-n+3) { text-align: center; }
.clip { overflow: hidden; }
td:nth-child(6) .clip { width: 109px; }
.stack { line-height: 26px; border-bottom: 2px dashed #8891a8; }
.tick { appearance: none; display: block; width: 25px; height: 25px; border: 2px solid #8891a8; border-radius: 4px; margin: 0 auto; background: #fff; }
.chev { display: flex; margin: 0 auto; color: #1d63ed; }
.chev svg { width: 16px; height: 16px; }
.dot { display: block; width: 16px; height: 16px; border-radius: 50%; background: #2e7f74; margin: 0 auto; }
.acts { display: flex; align-items: center; height: 46px; color: #677285; }
.acts button { width: 66px; height: 36px; }
.acts svg { width: 30px; height: 30px; }
.acts .more { width: 24px; height: 24px; color: #1d63ed; }
.stop { width: 26px; height: 26px; border-radius: 5px; background: #1d63ed; }
.rule { width: 1px; height: 36px; background: #e3e3e3; margin: 0 6px 0 18px; flex: none; }
.acts .del { width: 90px; color: #d42639; }
.acts .del svg { width: 26px; height: 26px; }
.total { font-size: 21px; font-weight: 400; line-height: 30px; text-align: right; margin-top: 13px; }

.panel { grid-row: 1 / 3; grid-column: 3; border-left: 1px solid #e3e3e3; padding: 27px 24px 0 24px; overflow: hidden; }
.panel-head { display: flex; justify-content: space-between; align-items: flex-start; height: 81px; }
.panel-head button { width: 40px; height: 56px; color: #8891a8; margin-right: 15px; }
.panel-head svg { width: 20px; height: 20px; }
h2 { font-size: 27px; line-height: 32px; }
h3 { font-size: 24px; }
.metric-value { font-size: 24px; line-height: 32px; margin-top: 10px; color: #677285; }
.metric-note { line-height: 22px; color: #677285; }
.chart { position: relative; margin-top: 49px; }
.mem { margin-top: 51px; }
.mem .chart { margin-top: 48px; }
.plot { width: 100%; max-width: 488px; }
.plot text { font-size: 18px; font-family: Roboto, sans-serif; }
.plot .ylab text { text-anchor: end; font-weight: 500; }
.xlab text { text-anchor: end; }
.plot .leg { font-size: 19px; }
.lines { stroke: #c8ccd4; stroke-width: 2; fill: none; }
.series { fill: none; stroke: #1d63ed; stroke-width: 6; stroke-linecap: round; }
.series .dash { stroke-dasharray: 9 10; stroke-width: 5; stroke-linecap: butt; }
.series .area { fill: #1d63ed; stroke: none; }
.zoom { position: absolute; top: 0; right: 4px; width: 165px; height: 56px; border: 1px solid #677285; border-radius: 5px; background: #fff; display: flex; align-items: center; justify-content: center; color: #1d63ed; }
.zoom button { width: 54px; height: 48px; }
.zoom button:disabled { color: #b0b0b0; }
.zoom svg { width: 26px; height: 26px; }

.status { grid-column: 1 / 3; grid-row: 2; background: #f9f9f9; display: flex; align-items: center; padding-right: 24px; color: #3a4352; font-size: 18px; }
.engine { display: flex; width: 156px; padding-left: 11px; color: #677285; }
.engine button { width: 49px; height: 30px; }
.ram { margin-right: 14px; }
.cpu-use { margin-right: 26px; }
.term { margin-left: auto; color: #000; }
.term svg { width: 20px; height: 18px; }
.version { display: flex; align-items: center; gap: 9px; margin-left: 18px; font-weight: 500; text-decoration: none; }
.version svg { width: 18px; height: 14px; }

.taskbar { height: 72px; flex: none; background: #eee; border-top: 2px solid #bcbcbc; display: grid; grid-template-columns: 1fr auto 1fr; align-items: center; color: #1a1a1a; font-family: "Open Sans", "Noto Sans", sans-serif; font-size: 17px; padding-bottom: 2px; }
.apps { grid-column: 2; display: flex; align-items: center; }
.apps button { width: 66px; height: 58px; position: relative; }
.apps button > svg { width: 36px; height: 36px; }
.apps .task-search { width: 146px; height: 44px; border-radius: 22px; background: #fafafa; box-shadow: 0 1px 2px #ccc; margin: 0 6px 0 9px; gap: 8px; }
.apps .task-search > svg { width: 21px; height: 21px; }
.open::after { content: ""; position: absolute; left: 50%; bottom: 0; width: 10px; height: 5px; margin-left: -5px; border-radius: 3px; background: #868686; }
.apps .current { width: 56px; margin: 0 5px; background: #f8f8f8; border-radius: 6px; box-shadow: 0 0 0 1px #e2e2e2; }
.current::after { width: 24px; margin-left: -12px; background: #5b7ea4; }
.profile { position: absolute; top: 3px; right: 8px; width: 24px; height: 24px; border-radius: 50%; border: 1px solid #888; background: radial-gradient(circle at 35% 45%, #4a3c38 0 15%, transparent 16%), radial-gradient(circle at 75% 60%, #6b5650 0 15%, transparent 16%), #c4cbc9; }
.zalo { width: 36px; height: 36px; border-radius: 12px; background: #fff; border-left: 4px solid #0768ff; border-bottom: 4px solid #0768ff; color: #0768ff; font: 700 14px/30px "Open Sans", sans-serif; text-align: center; }
.badge { position: absolute; top: 2px; right: 7px; width: 24px; height: 24px; border-radius: 50%; background: #f00; color: #fff; font-size: 16px; line-height: 24px; }
.tray { grid-column: 3; display: flex; align-items: center; justify-content: flex-end; padding-right: 28px; }
.lang { margin: 0 28px 0 31px; }
.sys { display: flex; gap: 12px; margin-right: 28px; }
.sys svg { width: 24px; height: 20px; }
.clock { text-align: right; line-height: 24px; }
```
